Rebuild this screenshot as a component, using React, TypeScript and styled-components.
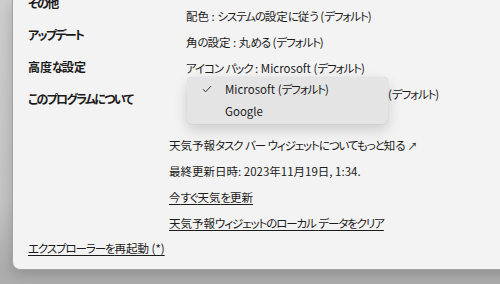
import styled, { createGlobalStyle } from "styled-components";

const GlobalStyle = createGlobalStyle`
  html, body {
    margin: 0;
    padding: 0;
    width: 500px;
    height: 284px;
    overflow: hidden;
    background: linear-gradient(180deg, #cdcdcd 0%, #c4c4c4 70%, #adadad 95%);
    font-family: "Noto Sans CJK JP", "Noto Sans", sans-serif;
    font-feature-settings: "palt";
    -webkit-font-smoothing: antialiased;
  }
`;

const Desktop = styled.div`
  width: 500px;
  height: 284px;
  padding-left: 12px;
  box-sizing: border-box;
`;

const Window = styled.div`
  width: 520px;
  height: 270px;
  background: #f3f3f3;
  border: 1px solid #a2a2a2;
  border-top: none;
  border-right: none;
  border-bottom-left-radius: 8px;
  box-shadow: 0 4px 14px rgba(0, 0, 0, 0.18);
  box-sizing: border-box;
  display: grid;
  grid-template-columns: 156px 1fr;
  overflow: hidden;
  color: #1b1b1b;
  font-size: 11.5px;
`;

const Nav = styled.nav`
  display: flex;
  flex-direction: column;
  margin-top: -13px;
  padding-left: 15px;
  padding-bottom: 8px;
  min-width: 0;
`;

const NavItem = styled.div`
  height: 32px;
  line-height: 32px;
  font-weight: 700;
  font-size: 12px;
  color: #1a1a1a;
  white-space: nowrap;
`;

const RestartLink = styled.a`
  margin-top: auto;
  line-height: 26px;
  color: #1b1b1b;
  white-space: nowrap;
  text-decoration: underline;
  text-underline-offset: 2px;
`;

const Main = styled.div`
  display: flex;
  flex-direction: column;
  padding-top: 3px;
`;

const Group = styled.div`
  position: relative;
  padding-left: 17px;
  margin-bottom: 25px;
`;

const Row = styled.div<{ $link?: boolean }>`
  height: 26px;
  line-height: 26px;
  white-space: nowrap;
  text-decoration: ${(p) => (p.$link ? "underline" : "none")};
  text-underline-offset: 2px;
`;

const Hidden = styled.span`
  padding-left: 202px;
`;

const Menu = styled.div`
  position: absolute;
  left: 18px;
  top: 74px;
  width: 201px;
  padding: 1px 0 2px;
  background: #e4e4e4;
  border-radius: 5px;
  box-shadow: 0 6px 14px rgba(0, 0, 0, 0.16), 0 0 1px rgba(0, 0, 0, 0.2);
`;

const MenuItem = styled.div`
  display: grid;
  grid-template-columns: 38px 1fr;
  align-items: center;
  height: 22px;
`;

const Check = styled.svg`
  justify-self: center;
  margin-left: 2px;
`;

const Arrow = styled.span`
  font-size: 10px;
  margin-left: 3px;
`;

// Yu Gothic UI draws kana narrower than Noto; tighten kana runs a little
const Narrow = styled.span<{ $bold?: boolean }>`
  letter-spacing: ${(p) => (p.$bold ? "-1.7px" : "-1.1px")};
`;

const kanaRun = /([\u3040-\u30ff]+)/;

const Jp = ({ children, bold }: { children: string; bold?: boolean }) => (
  <>
    {children.split(kanaRun).map((part, i) =>
      kanaRun.test(part) ? (
        <Narrow key={i} $bold={bold}>
          {part}
        </Narrow>
      ) : (
        part
      )
    )}
  </>
);

const navItems = ["その他", "アップデート", "高度な設定", "このプログラムについて"];

export default function App() {
  return (
    <Desktop>
      <GlobalStyle />
      <Window>
        <Nav>
          {navItems.map((label) => (
            <NavItem key={label}>
              <Jp bold>{label}</Jp>
            </NavItem>
          ))}
          <RestartLink>
            <Jp>エクスプローラーを再起動 (*)</Jp>
          </RestartLink>
        </Nav>
        <Main>
          <Group>
            <Row>
              <Jp>配色 : システムの設定に従う (デフォルト)</Jp>
            </Row>
            <Row>
              <Jp>角の設定 : 丸める (デフォルト)</Jp>
            </Row>
            <Row>
              <Jp>アイコン パック : Microsoft (デフォルト)</Jp>
            </Row>
            <Row>
              <Hidden>
                <Jp>(デフォルト)</Jp>
              </Hidden>
            </Row>
            <Menu>
              <MenuItem>
                <Check width="10" height="8" viewBox="0 0 10 8">
                  <path d="M1 4.2 L3.6 6.8 L9 1.2" fill="none" stroke="#333" strokeWidth="1" />
                </Check>
                <span>
                  <Jp>Microsoft (デフォルト)</Jp>
                </span>
              </MenuItem>
              <MenuItem>
                <span />
                <span>Google</span>
              </MenuItem>
            </Menu>
          </Group>
          <Row>
            <Jp>天気予報タスク バー ウィジェットについてもっと知る</Jp>
            <Arrow>↗</Arrow>
          </Row>
          <Row>最終更新日時: 2023年11月19日, 1:34.</Row>
          <Row $link>
            <Jp>今すぐ天気を更新</Jp>
          </Row>
          <Row $link>
            <Jp>天気予報ウィジェットのローカル データをクリア</Jp>
          </Row>
        </Main>
      </Window>
    </Desktop>
  );
}
